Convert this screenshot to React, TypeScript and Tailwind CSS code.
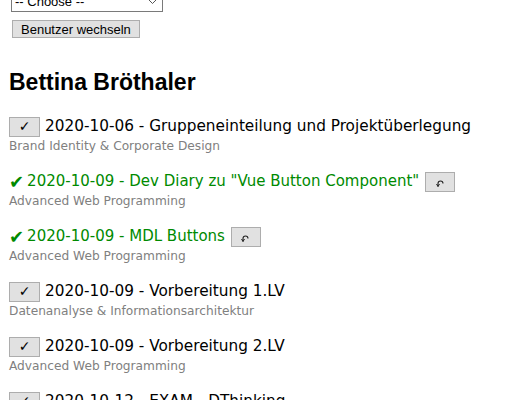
import React from 'react';

type Entry = {
  date: string;
  title: string;
  course: string;
  done: boolean;
};

const entries: Entry[] = [
  { date: '2020-10-06', title: 'Gruppeneinteilung und Projektüberlegung', course: 'Brand Identity & Corporate Design', done: false },
  { date: '2020-10-09', title: 'Dev Diary zu "Vue Button Component"', course: 'Advanced Web Programming', done: true },
  { date: '2020-10-09', title: 'MDL Buttons', course: 'Advanced Web Programming', done: true },
  { date: '2020-10-09', title: 'Vorbereitung 1.LV', course: 'Datenanalyse & Informationsarchitektur', done: false },
  { date: '2020-10-09', title: 'Vorbereitung 2.LV', course: 'Advanced Web Programming', done: false },
  { date: '2020-10-12', title: 'EXAM - DThinking', course: 'Design Thinking', done: false },
];

const btn =
  'shrink-0 h-[20px] bg-[#e1e1e1] border border-[#adadad] flex items-center justify-center text-black';

const UndoIcon = () => (
  <svg width="9" height="7" viewBox="0 0 9 7" className="mt-[3px]">
    <path d="M2 6.5 V3.5 Q2 1 4.5 1 Q7 1 7 3.5" fill="none" stroke="#222" strokeWidth="1.1" />
    <path d="M0.5 4 L2 6.5 L3.5 4" fill="none" stroke="#222" strokeWidth="1" />
  </svg>
);

const Item = ({ entry }: { entry: Entry }) => (
  <div className="mb-[17px]">
    <div className="h-[22px] flex items-center">
      {entry.done ? (
        <>
          <span className="text-[#008a00] text-[18px] mr-[3px] leading-none">✔</span>
          <span className="text-[#008a00] text-[15px] whitespace-nowrap">
            {entry.date} - {entry.title}
          </span>
          <button className={`${btn} w-[30px] ml-[6px]`}>
            <UndoIcon />
          </button>
        </>
      ) : (
        <>
          <button className={`${btn} w-[31px] mr-[5px] text-[14px] font-bold`}>✓</button>
          <span className="text-black text-[15.3px] whitespace-nowrap">
            {entry.date} - {entry.title}
          </span>
        </>
      )}
    </div>
    <div className="text-[12.2px] leading-[16px] text-[#808080]">{entry.course}</div>
  </div>
);

export default function App() {
  return (
    <div
      className="bg-white h-[400px] overflow-hidden px-[9px]"
      style={{ fontFamily: '"DejaVu Sans", sans-serif' }}
    >
      <div
        className="-mt-[9px] ml-[2px]"
        style={{ fontFamily: '"Liberation Sans", Arial, sans-serif' }}
      >
        <div className="w-[152px] h-[21px] border border-[#7a7a7a] bg-white flex items-center justify-between px-[3px] text-[13px]">
          <span>-- Choose --</span>
          <svg width="9" height="6" viewBox="0 0 9 6" className="mr-[2px]">
            <path d="M0.5 0.5 L4.5 4.5 L8.5 0.5" fill="none" stroke="#555" strokeWidth="1" />
          </svg>
        </div>
        <button className="mt-[8px] ml-[1px] h-[18px] px-[8px] bg-[#e1e1e1] border border-[#adadad] text-[13px] leading-none text-black">
          Benutzer wechseln
        </button>
      </div>
      <h2
        className="text-[23px] font-bold leading-[28px] mt-[27px] mb-[20px] text-black"
        style={{ fontFamily: '"Liberation Sans", Arial, sans-serif' }}
      >
        Bettina Bröthaler
      </h2>
      <div>
        {entries.map((e, i) => (
          <Item key={i} entry={e} />
        ))}
      </div>
    </div>
  );
}
